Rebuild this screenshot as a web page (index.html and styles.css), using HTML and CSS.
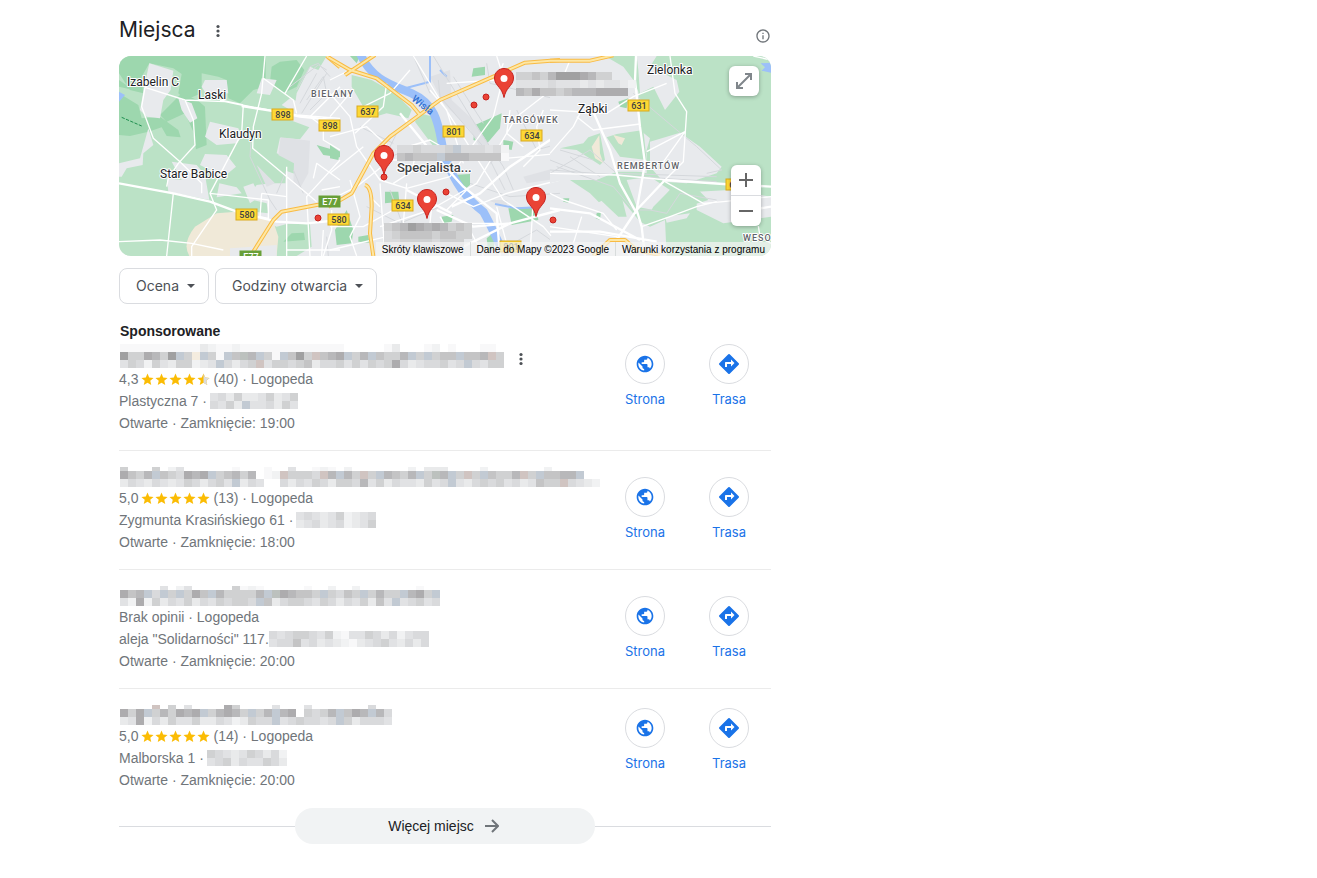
FILE: index.html
```html
<!DOCTYPE html>
<html lang="pl">

<head>
    <meta charset="UTF-8">
    <meta name="viewport" content="width=device-width, initial-scale=1.0">
    <title>Miejsca</title>
    <link rel="stylesheet" href="styles.css">
</head>

<body>

    <!-- Shared icons -->
    <svg class="sprite" aria-hidden="true">
        <symbol id="dots" viewBox="0 0 4 14">
            <circle cx="2" cy="2.5" r="1.6" />
            <circle cx="2" cy="7" r="1.6" />
            <circle cx="2" cy="11.5" r="1.6" />
        </symbol>
        <symbol id="star" viewBox="0 0 24 24">
            <path d="M12 17.8 18.9 22l-1.8-7.9L23.2 9l-8.1-.7L12 1 8.9 8.3.8 9l6.1 5.1L5.1 22z" />
        </symbol>
        <symbol id="globe" viewBox="0 0 24 24">
            <path d="M12 2C6.48 2 2 6.48 2 12s4.48 10 10 10 10-4.48 10-10S17.52 2 12 2zM4 12c0-.61.08-1.21.21-1.78L8.99 15v1c0 1.1.9 2 2 2v1.93C7.06 19.43 4 16.07 4 12zm13.89 5.4c-.26-.81-1-1.4-1.9-1.4h-1v-3c0-.55-.45-1-1-1h-6v-2h2c.55 0 1-.45 1-1V7h2c1.1 0 2-.9 2-2v-.41C17.92 5.77 20 8.65 20 12c0 2.08-.81 3.98-2.11 5.4z" />
        </symbol>
        <symbol id="route" viewBox="0 0 24 24">
            <path d="m21.71 11.29-9-9a1 1 0 0 0-1.41 0l-9 9a1 1 0 0 0 0 1.41l9 9c.39.39 1.02.39 1.41 0l9-9a1 1 0 0 0 0-1.41zM14 14.5V12h-4v3H8v-4c0-.55.45-1 1-1h5V7.500l3.500 3.500-3.500 3.500z" />
        </symbol>
        <symbol id="pin" viewBox="0 0 20 30">
            <path d="M10 .5C4.700.5.500 4.700.500 10c0 4 2.200 6.500 4.700 9.500C7.400 22.200 9 25 10 29.500c1-4.500 2.600-7.300 4.800-10 2.500-3 4.700-5.500 4.700-9.500C19.500 4.700 15.300.5 10 .5z" fill="#ea4335" stroke="#c5221f" />
            <circle cx="10" cy="10.500" r="3.500" fill="#fff" />
        </symbol>
    </svg>

    <main class="places">
        <header class="places-header">
            <h1>Miejsca</h1>
            <button class="dots-button" aria-label="Więcej opcji"><svg><use href="#dots" /></svg></button>
            <button class="info-button" aria-label="Informacje">
                <svg viewBox="0 0 24 24"><path d="M11 7h2v2h-2zm0 4h2v6h-2zm1-9C6.480 2 2 6.480 2 12s4.480 10 10 10 10-4.480 10-10S17.520 2 12 2zm0 18c-4.410 0-8-3.590-8-8s3.590-8 8-8 8 3.590 8 8-3.590 8-8 8z" /></svg>
            </button>
        </header>

        <section class="map" aria-label="Mapa">
            <svg class="map-canvas" viewBox="0 0 652 200" preserveAspectRatio="xMidYMid slice">
                <rect width="652" height="200" fill="#e8eaed" />
                <g transform="scale(.33333)">

                    <!-- West: forests, fields -->
                    <g transform="translate(-27 -18)">
                        <path class="park" d="M27 18H650L625 60 600 50 560 130 555 165 500 195 598 232 570 268 510 263 500 310 552 330 555 372 528 362 526 400 480 400 440 405 410 445 470 460 475 490 380 480 500 530 530 522 600 522 605 590 560 618H27z" />
                        <path class="forest" d="M27 18H467V110L430 120 390 160 355 145 350 90 325 80 275 70 275 130 225 150 205 130 215 72 190 55 118 40 95 80 100 130 60 120 27 70z" />
                        <path class="forest" d="M27 130 85 165 95 205 150 200 205 240 212 262 170 258 155 232 115 245 60 258 27 255zM215 130 262 150 285 170 290 285 258 298 250 245 225 190 170 215 150 195zM27 90 70 120 27 110zM485 50 510 35 560 30 583 60 560 110 520 130 480 95zM620 285 690 305V322L640 315zM545 550 582 548 585 570 520 575z" />
                        <path class="town" d="M118 40 190 62 182 120 160 150 150 205 110 200 90 180 105 100zM350 90 355 130 290 135 275 110 285 90zM205 145 245 160 262 205 240 218 215 180zM300 215 385 235 395 262 380 280 320 285 285 260zM27 340 90 325 115 235 130 285 100 310 98 345 50 355 35 380 27 380zM285 312 350 315 378 350 330 390 300 360 270 345zM185 335 260 345 285 375 298 450 250 440 175 425 170 385 215 390zM328 400 380 412 395 430 320 442zM455 85 500 90 480 135 440 130zM540 145 575 160 550 185 515 165zM400 410 430 400 450 440 420 460z" />
                        <path class="urban" d="M512 262 600 272 595 370 570 415 550 400 552 340 505 315zM440 345 495 400 470 410z" />
                        <path class="sand" d="M255 530 320 490 380 485 490 515 505 560 500 618H238Q215 580 255 530z" />
                        <path class="town" d="M360 595 430 590 500 585 500 618H360z" />
                        <path class="water" d="M27 125 45 135 27 155z" />
                        <path class="path" d="M35 202 95 228" />
                        <path class="minor" d="M425 240 420 320 480 450 500 480M560 120 600 50 625 40 660 80M590 150 640 80 650 130 600 180M570 160 620 70M530 360 500 430M650 560 655 618M550 360 580 430M575 190 650 70M540 110 625 45 650 60" />
                        <path class="road" d="M105 112 225 150 345 155 395 165 560 195 690 205M465 18 455 130 430 230 428 295 590 430 620 455M400 165 395 250 300 430 320 480 245 590V618M105 112 95 170 130 265 210 335 275 400V430M225 150 250 210 255 285 205 340 175 385 170 410M190 430 170 618M27 575 150 570 245 580 340 600M330 150 400 165M460 85 550 150 560 190M590 18 525 130M455 430 450 500 475 505 475 450 300 430M530 350V618M530 440 455 430M530 600H690M640 230 600 200 690 110M640 200V270L690 300M690 330 590 440 600 618M640 540 635 618M690 390 620 340 610 385M665 480V540L640 618M690 410 635 420" />
                        <path class="main-road" d="M27 400 190 430 300 455 380 485 500 515 590 520 690 510M395 168 500 185 570 200 690 212" />
                        <path class="highway" d="M690 455 620 465 515 485 490 510 430 605 420 618M650 18 690 52" />
                        <path class="highway-core" d="M690 455 620 465 515 485 490 510 430 605 420 618M650 18 690 52" />
                    </g>

                    <!-- Centre: river and the inner city -->
                    <g transform="translate(633 -18)">
                        <path class="park" d="M65 75 125 90 195 130 245 180 235 205 170 190 120 205 65 110zM270 190 310 200 325 260 330 315 300 275 255 215z" />
                        <path class="forest" d="M435 225 515 190 510 235 470 282 430 270zM365 375 420 372 420 405 390 430 370 400zM535 475 620 470 625 510 545 525zM165 425 205 425 208 455 165 460zM335 500 370 495 365 515 340 520zM0 285 30 305 25 330 0 325zM15 540 50 480 70 540 65 580 20 585zM430 55 465 50 465 75 425 80zM520 270 550 275 545 300 520 295zM85 560 115 555 118 578 85 575zM470 565 500 540 490 600 475 605zM60 18 90 18 80 40z" />
                        <path class="urban" d="M300 80 360 60 365 150 430 210 500 320 480 345 420 240 340 160zM530 470 470 450 530 450zM580 380 690 350V385L590 400z" />
                        <path class="river" d="M90 10C125 90 185 105 245 130 335 170 325 255 345 320 375 405 415 450 460 485 480 520 490 545 512 590" />
                        <path class="stream" d="M300 15V95L225 115M330 60 350 80M495 462 560 475 620 472M0 30 10 28" />
                        <path class="minor" d="M310 18 440 230 520 350 550 420M325 90 330 140 460 290 525 420M300 130 250 18M370 80 460 220M470 40 480 100 690 150M560 180 620 300 690 280M205 240 160 330 230 300M110 470 210 520 330 470M420 400 540 440 690 430M90 230 190 280M180 420 220 530 210 590M530 590 620 540 690 590" />
                        <path class="road" d="M0 90 60 60 140 10M0 130 60 200 80 290 150 390 230 415 360 380 490 200 520 80 500 18M60 130 0 200M80 180 180 130 240 60M100 290 0 370M0 260 110 230 170 285M150 400 165 618M230 400 220 520 250 618M310 420 290 618M250 18 330 150 450 340 520 450 640 530 690 590M400 340 350 180 300 120M690 100 560 200 440 400 300 480 150 530M0 600 170 560 310 520 500 520M0 450 80 410 180 330 330 330M350 430 430 470 530 430 690 390M200 300 300 270 370 310 470 330 690 310M330 500 400 618M420 540 460 618M500 470 540 618M640 180 620 230 630 300 580 350M610 440 600 618M350 100 500 90 520 40M540 180 530 250 580 290M75 250 160 170 170 100M0 530 100 530 190 480M60 390 90 500 60 560 80 618M350 480 410 420M190 400 245 365 260 300M120 440 150 470" />
                        <path class="main-road" d="M365 470 450 430 540 350 690 250M320 480 430 530 540 520 690 480M210 190 300 300 400 410 500 490 510 618M230 420 365 490M380 600 540 520" />
                        <path class="highway" d="M-5 470 40 445 65 430 130 310 180 260 330 150 585 38 690 30M-5 22 60 60 140 85 245 165 270 195M45 75 135 15M105 405Q125 410 125 470L120 550 130 618" />
                        <path class="highway-core" d="M-5 470 40 445 65 430 130 310 180 260 330 150 585 38 690 30M-5 22 60 60 140 85 245 165 270 195M45 75 135 15M105 405Q125 410 125 470L120 550 130 618" />
                    </g>

                    <!-- East: woods and suburbs -->
                    <g transform="translate(1293 -18)">
                        <path class="park" d="M165 18H663V618H350L345 510 300 530 270 515 190 500 120 430 60 390 140 390 200 365 270 365 290 300 300 265 270 240 265 125 250 90 220 50z" />
                        <path class="town" d="M260 18 320 18 300 50 380 90 388 125 345 180 310 110 270 130 265 60zM300 275 390 248 450 290 515 350 500 370 410 400 340 395 300 350zM230 390 300 380 360 420 310 480 260 470zM440 425 540 420 663 440V500L520 520 440 480zM0 90 245 90 250 150 270 240 290 310 290 370 200 350 0 400zM60 500 200 430 270 515 300 560 280 618H0V560zM345 500 420 490 410 505 350 518z" />
                        <path class="park" d="M30 295 100 280 115 262 150 250 165 330 150 345 80 300zM170 262 200 252 280 240 290 330 210 320zM140 390 200 375 235 405 210 420 230 500 205 500 120 420zM365 415 440 415 475 450 410 470 360 500 285 515 310 470z" />
                        <path class="forest" d="M205 155 235 145 230 175 210 170zM140 490 153 485 150 510 137 505zM40 445 58 445 55 458 40 455z" />
                        <path class="sand" d="M125 290 148 255 150 310 160 340 135 325zM190 255 225 265 215 285 205 280z" />
                        <path class="water" d="M632 40 663 38V68L635 62 645 52z" />
                        <path class="minor" d="M0 370 120 300 200 370 500 380M20 350 190 410 250 480 300 480 350 490 390 430 500 450M250 130 440 290 515 360 470 370M0 330 100 370M30 300 130 330M0 360 340 385 500 395M60 320 150 380" />
                        <path class="road" d="M0 180 80 185 170 190 250 140 350 100M80 200 130 240 270 222M90 190 70 230 0 310M360 18 375 130 410 185 400 335 345 390M60 30 40 80M330 350 405 245 290 305M345 395 460 460 520 455 663 440M275 530 360 500 440 470 500 455M0 430 40 450 160 490 200 540M0 370 200 375 350 390M95 500 70 580M610 18 663 30M625 528 630 560 663 580M0 530 200 560 240 618" />
                        <path class="main-road" d="M258 18 255 90 270 230 285 340 260 480 275 530 285 618M130 185 180 300 210 400 260 490M345 390 260 480 200 570M345 390 520 402 663 410M0 475 120 490 270 570M0 545 150 545 320 575M600 480 663 470" />
                        <path class="highway" d="M0 32H120L190 16M130 618 180 570 225 570 260 600 330 615" />
                        <path class="highway-core" d="M0 32H120L190 16M130 618 180 570 225 570 260 600 330 615" />
                    </g>
                </g>

                <!-- Road numbers -->
                <g class="shield">
                    <rect x="153" y="53" width="21" height="11" /><text x="164" y="62">898</text>
                    <rect x="200" y="64" width="21" height="11" /><text x="211" y="73">898</text>
                    <rect x="238" y="50" width="21" height="11" /><text x="249" y="59">637</text>
                    <rect x="324" y="70" width="21" height="11" /><text x="335" y="79">801</text>
                    <rect x="402" y="74" width="21" height="11" /><text x="413" y="83">634</text>
                    <rect x="273" y="144" width="21" height="11" /><text x="284" y="153">634</text>
                    <rect x="117" y="153" width="21" height="11" /><text x="128" y="162">580</text>
                    <rect x="209" y="158" width="21" height="11" /><text x="220" y="167">580</text>
                    <rect x="509" y="44" width="21" height="11" /><text x="520" y="53">631</text>
                    <rect x="381" y="185" width="21" height="11" /><text x="392" y="194">801</text>
                    <rect x="607" y="123" width="21" height="11" /><text x="618" y="132">637</text>
                </g>
                <g class="shield shield-green">
                    <rect x="200" y="140" width="21" height="11" /><text x="211" y="149">E77</text>
                    <rect x="121" y="195" width="21" height="11" /><text x="132" y="204">E77</text>
                </g>

                <g class="town-name">
                    <text x="8" y="30">Izabelin C</text>
                    <text x="79" y="43">Laski</text>
                    <text x="100" y="82">Klaudyn</text>
                    <text x="41" y="122">Stare Babice</text>
                    <text x="528" y="18">Zielonka</text>
                    <text x="459" y="57">Ząbki</text>
                    <text class="place-name" x="278" y="116">Specjalista...</text>
                </g>
                <g class="district-name">
                    <text x="192" y="41">BIELANY</text>
                    <text x="384" y="67">TARGÓWEK</text>
                    <text x="498" y="113">REMBERTÓW</text>
                    <text x="624" y="185">WESO</text>
                </g>
                <text class="river-name" transform="translate(292 44) rotate(38)">Wisła</text>

                <g class="dot">
                    <circle cx="355" cy="49" r="3" />
                    <circle cx="367" cy="41" r="3" />
                    <circle cx="265" cy="121" r="3" />
                    <circle cx="327" cy="136" r="3" />
                    <circle cx="434" cy="164" r="3" />
                    <circle cx="199" cy="162" r="3" />
                </g>
                <use href="#pin" x="375" y="12" width="20" height="30" />
                <use href="#pin" x="255" y="89" width="20" height="30" />
                <use href="#pin" x="298" y="133" width="20" height="30" />
                <use href="#pin" x="407" y="131" width="20" height="30" />
            </svg>

            <div class="mask map-mask map-mask-north" data-rows="443420001244..|666656667676678|23133432221111"></div>
            <div class="mask map-mask map-mask-west" data-rows="5545554b555658|32333b22233339"></div>
            <div class="mask map-mask map-mask-south" data-rows="43201212434|54333343344|5544445444."></div>

            <button class="map-button map-expand" aria-label="Powiększ mapę">
                <svg viewBox="0 0 18 18"><path d="M2 16 16 2M10 2H16V8M2 10V16H8" /></svg>
            </button>
            <div class="map-zoom">
                <button class="map-button" aria-label="Powiększ"><svg viewBox="0 0 18 18"><path d="M2 9H16M9 2V16" /></svg></button>
                <button class="map-button" aria-label="Pomniejsz"><svg viewBox="0 0 18 18"><path d="M2 9H16" /></svg></button>
            </div>
            <div class="map-credits">
                <button>Skróty klawiszowe</button>
                <span>Dane do Mapy ©2023 Google</span>
                <a href="#">Warunki korzystania z programu</a>
            </div>
        </section>

        <div class="filters">
            <button>Ocena <span class="caret"></span></button>
            <button>Godziny otwarcia <span class="caret"></span></button>
        </div>

        <h2>Sponsorowane</h2>

        <article class="place place-first">
            <div class="place-info">
                <div class="place-title">
                    <div class="mask" data-rows="9999999999789989999999999999.....97...98.9...99.|0441240b4yb49b3g2b49b304r321b42b3442b4b433b332r4|645846744876b5754r6445437554646454157655465b5644"></div>
                    <button class="dots-button" aria-label="Więcej opcji"><svg><use href="#dots" /></svg></button>
                </div>
                <p>4,3 <span class="stars" data-rating="4.5"></span> (40) · Logopeda</p>
                <p>Plastyczna 7 · <span class="mask mask-tall" data-rows="65747764764|5647b665746"></span></p>
                <p>Otwarte · Zamknięcie: 19:00</p>
            </div>
            <div class="actions">
                <a href="#"><span class="circle"><svg><use href="#globe" /></svg></span>Strona</a>
                <a href="#"><span class="circle"><svg><use href="#route" /></svg></span>Trasa</a>
            </div>
        </article>

        <article class="place">
            <div class="place-info">
                <div class="place-title">
                    <div class="mask mask-short" data-rows="4...4.86......9...9..6..989.8.......8.777....8.......8.|1342b345121b43242.98r4445r2b24r4b2342b4g2b4r4b3442r4b3322b..|75675676457546b756..575645744526475667465b6754546576344r5678"></div>
                </div>
                <p>5,0 <span class="stars" data-rating="5"></span> (13) · Logopeda</p>
                <p>Zygmunta Krasińskiego 61 · <span class="mask mask-tall" data-rows="6567648765|7657658764"></span></p>
                <p>Otwarte · Zamknięcie: 18:00</p>
            </div>
            <div class="actions">
                <a href="#"><span class="circle"><svg><use href="#globe" /></svg></span>Strona</a>
                <a href="#"><span class="circle"><svg><use href="#route" /></svg></span>Trasa</a>
            </div>
        </article>

        <article class="place">
            <div class="place-info">
                <div class="place-title">
                    <div class="mask mask-short" data-rows=".....6.86.....4989.....9..8..8.......9..|132b5b4b413b244442bg12334b4534b4244b214b|68184756475645445b3754456457564736b65465"></div>
                </div>
                <p>Brak opinii · Logopeda</p>
                <p class="tight">aleja "Solidarności" 117.<span class="mask mask-tall" data-rows="56544564896645758655|65536576789765467575"></span></p>
                <p>Otwarte · Zamknięcie: 20:00</p>
            </div>
            <div class="actions">
                <a href="#"><span class="circle"><svg><use href="#globe" /></svg></span>Strona</a>
                <a href="#"><span class="circle"><svg><use href="#route" /></svg></span>Trasa</a>
            </div>
        </article>

        <article class="place place-last">
            <div class="place-info">
                <div class="place-title">
                    <div class="mask mask-short" data-rows="....r.4.6....14....6...6.......5..|141b424121b42124b42b21.4542b312b25|7618574664775687455b6545565b475556"></div>
                </div>
                <p>5,0 <span class="stars" data-rating="5"></span> (14) · Logopeda</p>
                <p>Malborska 1 · <span class="mask mask-tall" data-rows="4567645758|6547566457"></span></p>
                <p>Otwarte · Zamknięcie: 20:00</p>
            </div>
            <div class="actions">
                <a href="#"><span class="circle"><svg><use href="#globe" /></svg></span>Strona</a>
                <a href="#"><span class="circle"><svg><use href="#route" /></svg></span>Trasa</a>
            </div>
        </article>

        <div class="more">
            <button>Więcej miejsc
                <svg viewBox="0 0 14 14"><path d="M0 7H13M7 1 13 7 7 13" /></svg>
            </button>
        </div>
    </main>

    <script src="script.js"></script>
</body>

</html>
```

FILE: styles.css
```css
body {
    margin: 0;
    background-color: #fff;
    color: #202124;
    font-family: "Liberation Sans", Arial, sans-serif;
    font-size: 14px;
}

button {
    padding: 0;
    border: none;
    background: none;
    color: inherit;
    font: inherit;
    cursor: pointer;
}

a {
    color: inherit;
    text-decoration: none;
}

.sprite {
    display: none;
}

.places {
    max-width: 652px;
    margin-left: 119px;
}

/* Header */
.places-header {
    display: flex;
    align-items: center;
    height: 56px;
    padding-top: 5px;
    box-sizing: border-box;
}

h1 {
    margin: 0 21px 2px 0;
    font-family: Inter, sans-serif;
    font-size: 21px;
    font-weight: 400;
    line-height: 28px;
}

.dots-button svg {
    display: block;
    width: 4px;
    height: 14px;
    fill: #4d5156;
}

.info-button {
    align-self: flex-end;
    margin-left: auto;
    margin-bottom: 12px;
}

.info-button svg {
    display: block;
    width: 16px;
    height: 16px;
    fill: #70757a;
}

/* Map */
.map {
    position: relative;
    height: 200px;
    border-radius: 12px;
    overflow: hidden;
}

.map-canvas {
    display: block;
    width: 100%;
    height: 100%;
    font-family: Roboto, sans-serif;
}

.park { fill: #bbe2c6; }
.forest { fill: #9dd7ae; }
.town { fill: #e8eaed; }
.urban { fill: #dfe1e5; }
.sand { fill: #f0e9d8; }
.water { fill: #9cc0f9; }

.river,
.stream,
.minor,
.road,
.main-road,
.path,
.highway,
.highway-core {
    fill: none;
    stroke-linejoin: round;
}

.river {
    stroke: #9cc0f9;
    stroke-width: 25;
}

.stream {
    stroke: #9cc0f9;
    stroke-width: 6;
}

.minor {
    stroke: #d5d8dc;
    stroke-width: 3;
}

.road {
    stroke: #fff;
    stroke-width: 4;
}

.main-road {
    stroke: #fff;
    stroke-width: 7;
}

.path {
    stroke: #1e8e4e;
    stroke-width: 3;
    stroke-dasharray: 10 4;
}

.highway {
    stroke: #f9bb43;
    stroke-width: 12;
}

.highway-core {
    stroke: #fde7a5;
    stroke-width: 6;
}

.shield {
    font-size: 9px;
    font-weight: 500;
    text-anchor: middle;
}

.shield rect {
    fill: #fdd835;
    stroke: #d9a91f;
}

.shield text {
    fill: #3c4043;
}

.shield-green rect {
    fill: #689f38;
    stroke: #689f38;
}

.shield-green text {
    fill: #fff;
}

.town-name,
.district-name {
    fill: #202124;
    stroke: #fff;
    stroke-width: 2px;
    stroke-linejoin: round;
    paint-order: stroke;
    font-size: 12px;
}

.town-name .place-name {
    fill: #3c4043;
    font-size: 13px;
    font-weight: 500;
}

.district-name {
    fill: #5f6368;
    font-size: 9px;
    font-weight: 500;
    letter-spacing: 1px;
}

.river-name {
    fill: #2f6fd0;
    font-size: 10px;
    font-weight: 500;
}

.dot {
    fill: #ea4335;
    stroke: #c5221f;
}

.map-mask {
    position: absolute;
}

.map-mask-north {
    top: 16px;
    left: 397px;
}

.map-mask-west {
    top: 89px;
    left: 278px;
}

.map-mask-south {
    top: 167px;
    left: 265px;
}

.map-button {
    display: flex;
    align-items: center;
    justify-content: center;
    width: 30px;
    height: 30px;
    background-color: #fff;
}

.map-button svg {
    width: 18px;
    height: 18px;
    fill: none;
    stroke: #666;
    stroke-width: 2;
}

.map-expand,
.map-zoom {
    position: absolute;
    border-radius: 6px;
    box-shadow: 0 1px 4px rgba(0, 0, 0, 0.3);
}

.map-expand {
    top: 10px;
    right: 12px;
}

.map-expand svg {
    stroke: #80868b;
}

.map-zoom {
    right: 10px;
    bottom: 30px;
    overflow: hidden;
}

.map-zoom .map-button + .map-button {
    border-top: 1px solid #dadce0;
    height: 31px;
}

.map-credits {
    position: absolute;
    right: 0;
    bottom: 0;
    display: flex;
    color: #000;
    font-size: 10px;
}

.map-credits > * {
    padding: 1px 6px 0;
    background-color: rgba(245, 245, 245, 0.7);
    line-height: 13px;
    white-space: nowrap;
}

.map-credits > * + * {
    border-left: 1px solid rgba(200, 205, 205, 0.6);
}

/* Filters */
.filters {
    display: flex;
    gap: 6px;
    margin-top: 12px;
}

.filters button {
    display: flex;
    align-items: center;
    gap: 8px;
    height: 36px;
    padding: 0 13px 1px 16px;
    border: 1px solid #dadce0;
    border-radius: 8px;
    color: #4d5156;
    font-family: Inter, sans-serif;
    font-size: 14px;
}

.caret {
    border: 4px solid transparent;
    border-top-color: #4d5156;
    border-bottom: none;
}

h2 {
    margin: 17px 0 5px 1px;
    font-size: 14px;
    line-height: 20px;
}

/* List */
.place {
    display: flex;
    align-items: center;
    justify-content: space-between;
    padding: 14px 0 16px;
    border-bottom: 1px solid #ebebeb;
    color: #70757a;
}

.place-first {
    align-items: flex-start;
    padding-top: 0;
}

.place-last {
    align-items: flex-start;
    padding-bottom: 0;
    border-bottom: none;
}

.place p {
    display: flex;
    align-items: center;
    gap: 3px;
    margin: 0;
    line-height: 22px;
    white-space: nowrap;
}

.place .tight {
    gap: 0;
}

.place-title {
    display: flex;
    align-items: flex-end;
    gap: 15px;
    height: 22px;
    margin-left: 1px;
}

.place-title .dots-button {
    margin-bottom: 2px;
}

.stars {
    display: flex;
    gap: 1px;
}

.stars svg {
    width: 13px;
    height: 13px;
    fill: #fbbc04;
}

.mask svg {
    display: block;
}

.actions {
    display: flex;
}

.place-first .actions {
    margin-top: -2px;
}

.place-last .actions {
    margin-top: 5px;
}

.actions a {
    display: flex;
    flex-direction: column;
    align-items: center;
    gap: 5px;
    width: 84px;
    color: #1a73e8;
    font-family: Inter, sans-serif;
    font-size: 13px;
    line-height: 20px;
}

.circle {
    display: flex;
    align-items: center;
    justify-content: center;
    width: 38px;
    height: 38px;
    border: 1px solid #dadce0;
    border-radius: 50%;
}

.circle svg {
    width: 20px;
    height: 20px;
    fill: #1a73e8;
}

.actions a:last-child svg {
    width: 24px;
    height: 24px;
}

/* More button */
.more {
    display: flex;
    align-items: center;
    margin-top: 17px;
}

.more::before,
.more::after {
    content: "";
    flex: 1;
    height: 1px;
    background-color: #dadce0;
}

.more button {
    display: flex;
    align-items: center;
    justify-content: center;
    gap: 11px;
    width: 300px;
    height: 36px;
    padding-right: 3px;
    border-radius: 18px;
    background-color: #f1f3f4;
}

.more svg {
    width: 14px;
    height: 14px;
    fill: none;
    stroke: #70757a;
    stroke-width: 2;
}
```

FILE: script.js
```javascript
const SVG_NS = 'http://www.w3.org/2000/svg';

// Cell shades, darkest to lightest, then the tinted ones
const shades = {
    0: '#a0a0a1', 1: '#adacae', 2: '#b8b8ba', 3: '#c4c4c5', 4: '#d0d1d2',
    5: '#d9dadc', 6: '#e1e2e4', 7: '#e9eaeb', 8: '#f1f2f3', 9: '#f8f8f9',
    b: '#c2cad3', g: '#bcc1be', r: '#d0c4c1', y: '#f4ecdf'
};

function svgElement(name, attributes) {
    const element = document.createElementNS(SVG_NS, name);
    for (const key in attributes) {
        element.setAttribute(key, attributes[key]);
    }
    return element;
}

// Hidden names and phone numbers are drawn as a mosaic of 8px cells
document.querySelectorAll('.mask').forEach(mask => {
    const rows = mask.dataset.rows.split('|');
    const cut = mask.classList.contains('mask-short') ? 4 : 0;
    const columns = Math.max(...rows.map(row => row.length));
    const width = columns * 8;
    const height = rows.length * 8 - cut;
    const svg = svgElement('svg', {
        width: width,
        height: height,
        viewBox: `0 ${cut} ${width} ${height}`,
        'shape-rendering': 'crispEdges'
    });

    rows.forEach((row, y) => {
        [...row].forEach((cell, x) => {
            if (shades[cell]) {
                svg.append(svgElement('rect', { x: x * 8, y: y * 8, width: 8, height: 8, fill: shades[cell] }));
            }
        });
    });
    mask.append(svg);
});

// Rating stars, the last one may be half grey
document.querySelectorAll('.stars').forEach(stars => {
    const rating = Number(stars.dataset.rating);
    for (let i = 0; i < 5; i++) {
        const svg = svgElement('svg', { viewBox: '0 0 24 24' });
        svg.append(svgElement('use', { href: '#star' }));
        if (rating - i < 1) {
            svg.append(svgElement('path', { d: 'M12 17.8 18.9 22l-1.8-7.9L23.2 9l-8.1-.7L12 1z', fill: '#dadce0' }));
        }
        stars.append(svg);
    }
});
```
